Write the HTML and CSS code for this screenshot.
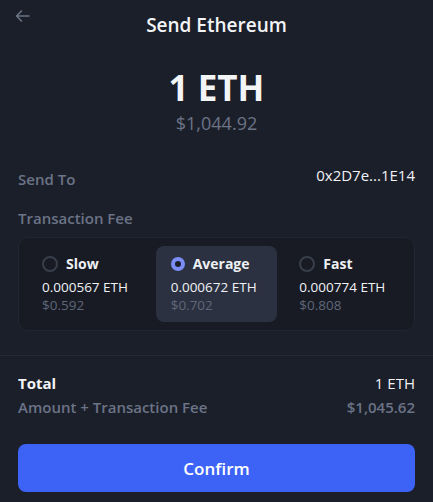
FILE: index.html
```html
<!DOCTYPE html>
<html lang="en">
<head>
    <meta charset="UTF-8">
    <meta name="viewport" content="width=device-width, initial-scale=1.0">
    <title>Send Ethereum</title>
    <link rel="stylesheet" href="styles.css">
</head>
<body>
    <div class="screen">
        <header class="header">
            <button class="back" type="button" aria-label="Back">
                <svg width="15" height="12" viewBox="0 0 15 12" fill="none" stroke="currentColor" stroke-width="1.6" stroke-linecap="round" stroke-linejoin="round">
                    <path d="M14 6H1.5M6.5 1L1.5 6l5 5"/>
                </svg>
            </button>
            <h1>Send Ethereum</h1>
        </header>

        <div class="amount">
            <div class="amount-eth">1 ETH</div>
            <div class="amount-usd">$1,044.92</div>
        </div>

        <div class="row send-to">
            <span class="label">Send To</span>
            <span class="address">0x2D7e...1E14</span>
        </div>

        <div class="label fee-title">Transaction Fee</div>

        <div class="fee-card">
            <div class="fee-option">
                <div class="fee-head"><span class="radio"></span>Slow</div>
                <div class="fee-eth">0.000567 ETH</div>
                <div class="fee-usd">$0.592</div>
            </div>
            <div class="fee-option selected">
                <div class="fee-head"><span class="radio"></span>Average</div>
                <div class="fee-eth">0.000672 ETH</div>
                <div class="fee-usd">$0.702</div>
            </div>
            <div class="fee-option">
                <div class="fee-head"><span class="radio"></span>Fast</div>
                <div class="fee-eth">0.000774 ETH</div>
                <div class="fee-usd">$0.808</div>
            </div>
        </div>
    </div>

    <div class="summary">
        <div class="row">
            <span class="total">Total</span>
            <span class="total-eth">1 ETH</span>
        </div>
        <div class="row">
            <span class="label">Amount + Transaction Fee</span>
            <span class="label">$1,045.62</span>
        </div>
        <button class="confirm" type="button">Confirm</button>
    </div>
</body>
</html>
```

FILE: styles.css
```css
body {
    font-family: "Open Sans", "Noto Sans", Arial, sans-serif;
    margin: 0;
    padding: 0;
    background-color: #1b1f2a;
    color: #f1f2f5;
}
.screen {
    padding: 0 18px;
}
.header {
    position: relative;
    height: 50px;
    display: flex;
    align-items: center;
    justify-content: center;
}
.header h1 {
    margin: 0;
    font-size: 19px;
    font-weight: 600;
    color: #f3f4f6;
}
.back {
    position: absolute;
    left: -3px;
    top: 10px;
    background: none;
    border: none;
    padding: 0;
    color: #6b7386;
    cursor: pointer;
}
.amount {
    text-align: center;
    margin-top: 16px;
}
.amount-eth {
    font-size: 35px;
    font-weight: 700;
    line-height: 44px;
    color: #f3f4f6;
}
.amount-usd {
    margin-top: 2px;
    font-size: 18px;
    line-height: 22px;
    color: #6b7386;
}
.row {
    display: flex;
    justify-content: space-between;
    align-items: center;
}
.label {
    font-size: 15px;
    font-weight: 600;
    color: #6b7386;
}
.send-to {
    margin-top: 31px;
    align-items: flex-start;
}
.send-to .label {
    margin-top: 4px;
}
.address {
    font-size: 15px;
    color: #f1f2f5;
}
.fee-title {
    margin-top: 18px;
    line-height: 22px;
}
.fee-card {
    margin-top: 8px;
    display: grid;
    grid-template-columns: repeat(3, 1fr);
    gap: 7px;
    padding: 8px;
    background-color: #181b24;
    border: 1px solid #222633;
    border-radius: 10px;
}
.fee-option {
    padding: 8px 15px 8px;
    border-radius: 8px;
}
.fee-option.selected {
    background-color: #2b3140;
}
.fee-head {
    display: flex;
    align-items: center;
    gap: 8px;
    font-size: 14px;
    font-weight: 700;
    line-height: 20px;
    color: #eef0f3;
}
.radio {
    width: 12px;
    height: 12px;
    border: 2px solid #393e4b;
    border-radius: 50%;
}
.selected .radio {
    border: 4px solid #7b8df6;
    width: 6px;
    height: 6px;
    background-color: #1b1f2a;
}
.fee-eth {
    margin-top: 4px;
    font-size: 13.5px;
    line-height: 18px;
    color: #f1f2f5;
}
.fee-usd {
    font-size: 13.5px;
    line-height: 18px;
    color: #5f6778;
}
.summary {
    margin-top: 24px;
    border-top: 1px solid #262a36;
    padding: 15px 18px 0;
}
.summary .row {
    line-height: 24px;
}
.total {
    font-size: 15px;
    font-weight: 700;
    color: #f3f4f6;
}
.total-eth {
    font-size: 15px;
    color: #f1f2f5;
}
.confirm {
    display: block;
    width: 100%;
    height: 48px;
    margin-top: 25px;
    border: none;
    border-radius: 8px;
    background-color: #3d63f6;
    color: #ffffff;
    font-family: inherit;
    font-size: 17px;
    font-weight: 600;
    cursor: pointer;
}
```
